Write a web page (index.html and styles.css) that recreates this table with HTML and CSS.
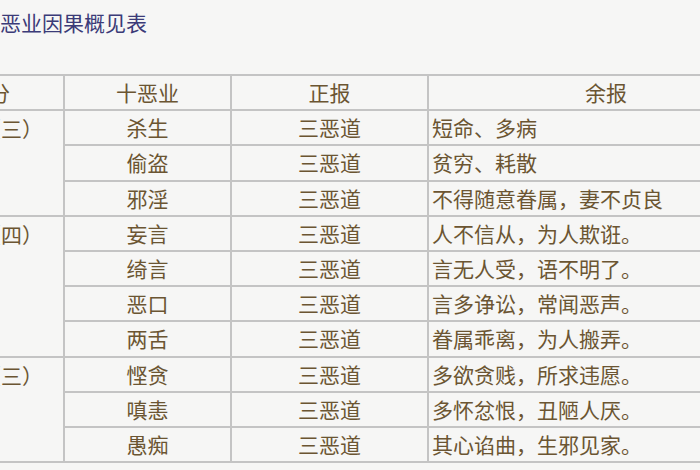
FILE: index.html
```html
<!DOCTYPE html>
<html lang="zh">
<head>
<meta charset="utf-8">
<title>十恶业因果概见表</title>
<link rel="stylesheet" href="styles.css">
</head>
<body>
<div class="page">
  <h1 class="title">十恶业因果概见表</h1>
  <table class="karma">
    <colgroup>
      <col class="c1"><col class="c2"><col class="c3"><col class="c4">
    </colgroup>
    <thead>
      <tr><th class="h1">区分</th><th>十恶业</th><th>正报</th><th>余报</th></tr>
    </thead>
    <tbody>
      <tr><td class="grp" rowspan="3">身业（三）</td><td class="mid">杀生</td><td class="mid">三恶道</td><td>短命、多病</td></tr>
      <tr><td class="mid">偷盗</td><td class="mid">三恶道</td><td>贫穷、耗散</td></tr>
      <tr><td class="mid">邪淫</td><td class="mid">三恶道</td><td>不得随意眷属，妻不贞良</td></tr>
      <tr><td class="grp" rowspan="4">口业（四）</td><td class="mid">妄言</td><td class="mid">三恶道</td><td>人不信从，为人欺诳。</td></tr>
      <tr><td class="mid">绮言</td><td class="mid">三恶道</td><td>言无人受，语不明了。</td></tr>
      <tr><td class="mid">恶口</td><td class="mid">三恶道</td><td>言多诤讼，常闻恶声。</td></tr>
      <tr><td class="mid">两舌</td><td class="mid">三恶道</td><td>眷属乖离，为人搬弄。</td></tr>
      <tr><td class="grp" rowspan="3">意业（三）</td><td class="mid">悭贪</td><td class="mid">三恶道</td><td>多欲贪贱，所求违愿。</td></tr>
      <tr><td class="mid">嗔恚</td><td class="mid">三恶道</td><td>多怀忿恨，丑陋人厌。</td></tr>
      <tr><td class="mid">愚痴</td><td class="mid">三恶道</td><td>其心谄曲，生邪见家。</td></tr>
    </tbody>
  </table>
</div>
</body>
</html>
```
FILE: styles.css
```css
html, body {
  margin: 0;
  padding: 0;
  background: #f6f6f5;
  overflow: hidden;
}
.page {
  padding-top: 8px;
  font-family: "Noto Sans CJK SC", "Noto Sans", sans-serif;
}
.title {
  margin: 0 0 38px -21px;
  font-size: 21px;
  line-height: 28px;
  font-weight: normal;
  color: #3b3b78;
  white-space: nowrap;
}
.karma {
  margin-left: -70px;
  width: 853px;
  border-collapse: collapse;
  table-layout: fixed;
  font-size: 21px;
  color: #6b5532;
}
.c1 { width: 133px; }
.c2 { width: 167px; }
.c3 { width: 197px; }
.c4 { width: 356px; }
.karma th,
.karma td {
  border: 2px solid #c4c4c4;
  height: 33.2px;
  padding: 0 3px;
  line-height: 33px;
  white-space: nowrap;
  font-weight: normal;
}
.karma th {
  text-align: center;
}
.karma th.h1 {
  padding-right: 20px;
}
.karma td {
  text-align: left;
}
.karma td.mid {
  text-align: center;
}
.karma td.grp {
  vertical-align: top;
  padding-left: 6px;
  padding-top: 1px;
}
```
